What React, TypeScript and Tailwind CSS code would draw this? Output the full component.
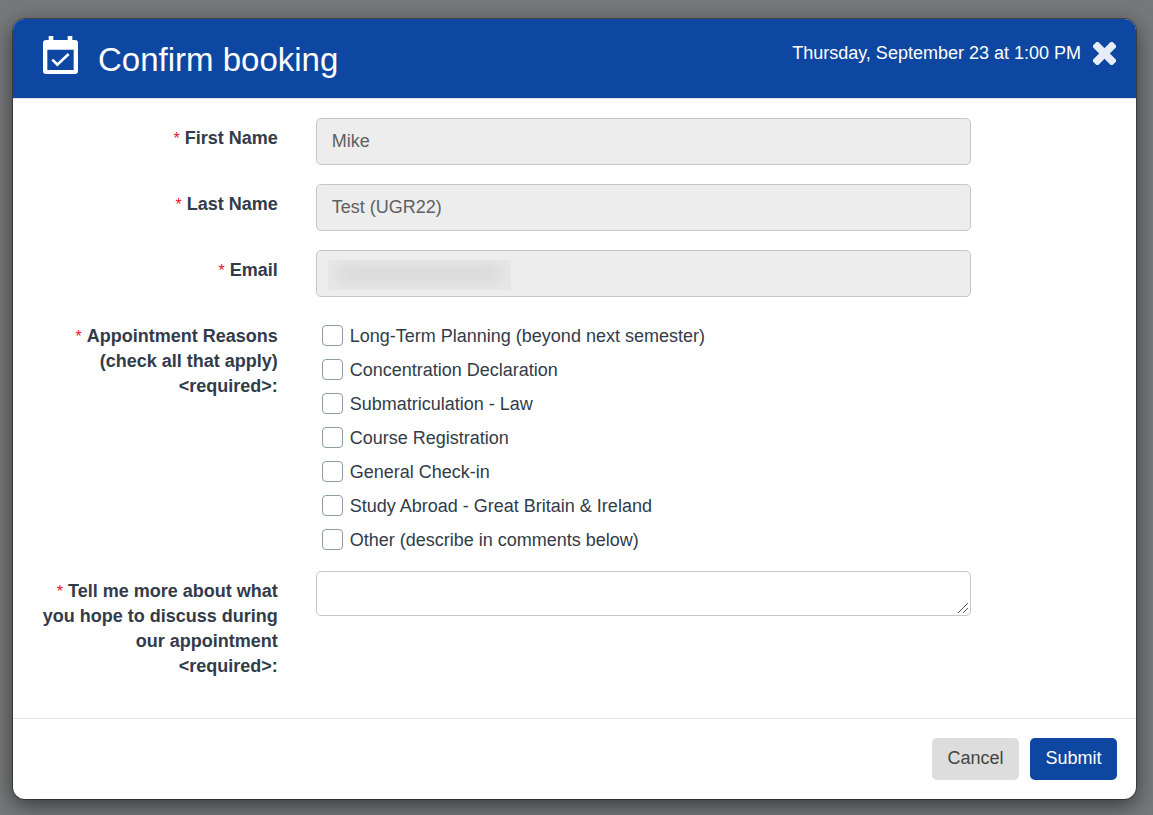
import React from 'react';

type FieldRowProps = {
  id: string;
  label: React.ReactNode;
  children: React.ReactNode;
};

const reasons = [
  'Long-Term Planning (beyond next semester)',
  'Concentration Declaration',
  'Submatriculation - Law',
  'Course Registration',
  'General Check-in',
  'Study Abroad - Great Britain & Ireland',
  'Other (describe in comments below)',
];

const inputStyle =
  'block w-full h-[47px] px-[15px] rounded-[5px] border border-[#c6c6c6] bg-[#ededed] text-[#606060]';

const CalendarIcon = () => (
  <svg viewBox="0 0 105 114" className="w-[35px] h-[38px]" aria-hidden="true">
    <path
      fill="#fff"
      fillRule="evenodd"
      d="M17 0h14v12h43V0h14v12h8q9 0 9 9v84q0 9-9 9H9q-9 0-9-9V21q0-9 9-9h8zM13 41v61h79V41z"
    />
    <path d="M28 71l15 15 34-32" fill="none" stroke="#fff" strokeWidth="8" />
  </svg>
);

const CloseIcon = () => (
  <svg viewBox="0 0 66 66" className="size-[23px]" fill="#e7edf6" aria-hidden="true">
    <rect x="-7" y="22" width="80" height="22" rx="6" transform="rotate(45 33 33)" />
    <rect x="-7" y="22" width="80" height="22" rx="6" transform="rotate(-45 33 33)" />
  </svg>
);

const Required = () => <span className="mr-[5px] font-normal text-[16px] text-[#e8112d]">*</span>;

const FieldRow = (props: FieldRowProps) => {
  const { id, label, children } = props;

  return (
    <div className="flex">
      <label htmlFor={id} className="w-1/4 pl-7 pr-4 pt-2 text-right font-bold">
        <Required />
        {label}
      </label>
      <div className="w-7/12 ml-[22px]">{children}</div>
    </div>
  );
};

const App = () => {
  return (
    <div className="min-h-screen bg-[#77787a] pl-[13px] pt-[19px] pb-4 pr-[17px] font-['Liberation_Sans',Arial,sans-serif] text-[18px] leading-[25px] text-[#323b49]">
      <div
        role="dialog"
        aria-labelledby="title"
        className="rounded-xl overflow-hidden bg-white shadow-[0_0_0_1px_rgba(0,0,0,0.35),0_6px_22px_rgba(0,0,0,0.55)]"
      >
        <header className="flex justify-between h-20 pl-[30px] pr-5 bg-[#0e47a1] text-white border-b border-[#e5e5e5]">
          <div className="flex items-start gap-5 pt-[17px]">
            <CalendarIcon />
            <h1 id="title" className="pt-1 text-[33px] leading-[40px]">
              Confirm booking
            </h1>
          </div>
          <div className="flex items-center gap-3 h-[68px]">
            <span>Thursday, September 23 at 1:00 PM</span>
            <button type="button" aria-label="Close">
              <CloseIcon />
            </button>
          </div>
        </header>

        <form>
          <div className="flex flex-col gap-[19px] pt-[19px] pb-[39px]">
            <FieldRow id="first" label="First Name">
              <input id="first" className={inputStyle} defaultValue="Mike" disabled />
            </FieldRow>
            <FieldRow id="last" label="Last Name">
              <input id="last" className={inputStyle} defaultValue="Test (UGR22)" disabled />
            </FieldRow>
            <FieldRow id="email" label="Email">
              <div className="relative">
                <input id="email" type="email" className={inputStyle} disabled />
                {/* redacted address */}
                <div className="absolute left-3 top-[10px] w-[183px] h-[30px] overflow-hidden bg-[#e8e8e8]">
                  <div className="mx-2 mt-1.5 h-4 rounded-full bg-[#d6d6d6] blur-[8px]" />
                </div>
              </div>
            </FieldRow>

            <div role="group" aria-labelledby="reasons" className="flex">
              <div id="reasons" className="w-1/4 pl-7 pr-4 pt-2 text-right font-bold">
                <Required />
                Appointment Reasons (check all that apply) &lt;required&gt;:
              </div>
              <div className="w-7/12 ml-[22px] pl-1.5 pt-[3px]">
                {reasons.map((reason) => (
                  <label key={reason} className="flex items-center gap-[7px] h-[34px]">
                    <input
                      type="checkbox"
                      className="appearance-none size-[21px] mb-0.5 shrink-0 rounded-[4px] border border-[#8d9da8] bg-white checked:bg-[#0e47a1]"
                    />
                    {reason}
                  </label>
                ))}
              </div>
            </div>

            <div className="-mt-[5px]">
              <FieldRow
                id="comments"
                label="Tell me more about what you hope to discuss during our appointment <required>:"
              >
                <div className="relative">
                  <textarea
                    id="comments"
                    className="block w-full h-[45px] px-[15px] py-2 rounded-[5px] border border-[#c6c6c6] bg-white resize-y [&::-webkit-resizer]:bg-transparent"
                  />
                  <svg
                    viewBox="0 0 10 10"
                    className="absolute right-[3px] bottom-[3px] size-2.5 pointer-events-none"
                    aria-hidden="true"
                  >
                    <path d="M0 10L10 0M5 10l5-5" stroke="#555" />
                  </svg>
                </div>
              </FieldRow>
            </div>
          </div>

          <footer className="flex justify-end gap-[11px] pt-[19px] pb-[19px] pr-[19px] border-t border-[#e2e2e2]">
            <button
              type="button"
              className="w-[87px] h-[42px] pb-0.5 rounded-[5px] bg-[#dddddd] text-[#444444]"
            >
              Cancel
            </button>
            <button
              type="submit"
              className="w-[87px] h-[42px] pb-0.5 rounded-[5px] bg-[#0e47a1] text-white"
            >
              Submit
            </button>
          </footer>
        </form>
      </div>
    </div>
  );
};

export default App;
